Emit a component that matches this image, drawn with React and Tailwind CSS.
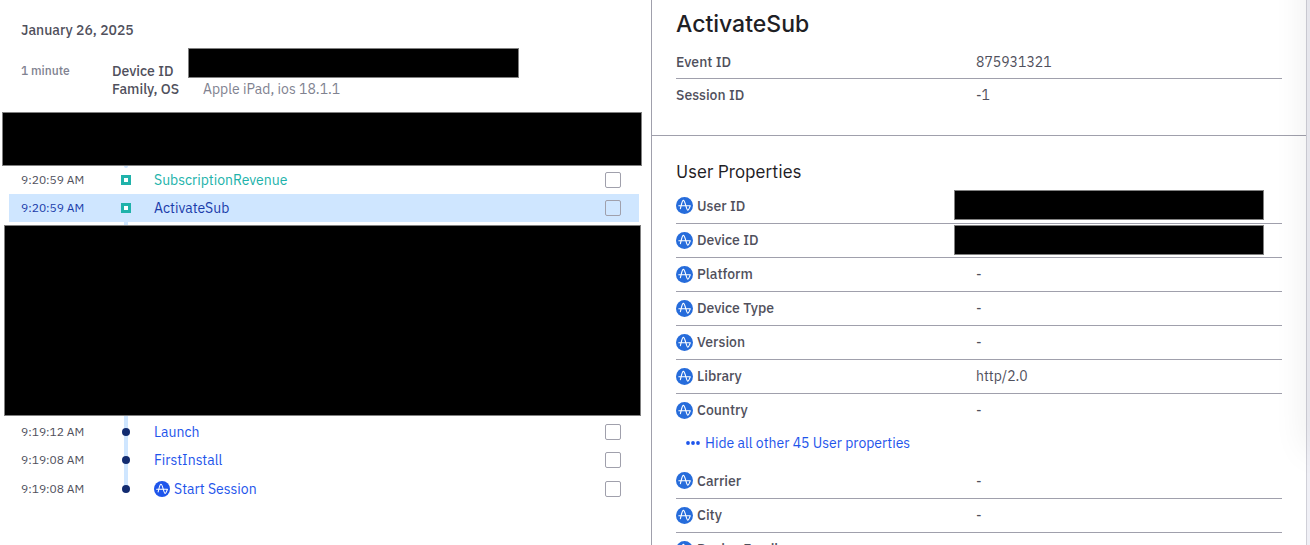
function AmplitudeIcon({ className }) {
  return (
    <svg viewBox="0 0 24 24" className={className} aria-hidden="true">
      <circle cx="12" cy="12" r="12" fill="currentColor" />
      <path
        d="M4 12.4H20.2C19 15.2 18 18.6 16.8 18.6C14.4 18.6 13.2 4.8 10.4 4.8C8.4 4.8 7.6 11.5 6.2 16.4"
        fill="none"
        stroke="#fff"
        strokeWidth="1.6"
        strokeLinecap="round"
        strokeLinejoin="round"
      />
    </svg>
  );
}

function Redaction({ className }) {
  return <div className={`border border-[#808080] bg-black ${className}`} />;
}

function Marker({ kind }) {
  return kind === "revenue" ? (
    <span className="relative size-[10px] border-[3px] border-[#20b2aa] bg-white" />
  ) : (
    <span className="relative size-2 rounded-full bg-[#122b70]" />
  );
}

function EventRow({ id, time, name, kind, selected, icon, line }) {
  return (
    <li
      className={`flex items-center pr-[18px] pl-3 ${icon ? "h-[30px]" : "h-7"} ${selected ? "bg-[#cfe6ff]" : ""}`}
    >
      <label htmlFor={id} className={`w-[91px] text-xs ${selected ? "text-[#1a3caa]" : "text-[#50505c]"}`}>
        {time}
      </label>
      <span className="relative flex w-7 items-center justify-center self-stretch">
        {line && <span className={`absolute left-3 w-1 bg-[#cfe6ff] ${line}`} />}
        <Marker kind={kind} />
      </span>
      <a
        href="#event"
        className={`ml-[14px] flex grow items-center gap-1 text-sm ${
          kind === "revenue" ? (selected ? "text-[#1a3caa]" : "text-[#20b2aa]") : "text-[#1e55eb]"
        }`}
      >
        {icon && <AmplitudeIcon className="size-4" />}
        {name}
      </a>
      <input
        id={id}
        type="checkbox"
        className="size-4 appearance-none rounded-[2px] border border-[#a0a0ac] checked:bg-[#1e55eb]"
      />
    </li>
  );
}

function Timeline() {
  return (
    <section className="min-w-0 text-[#50505c]">
      <h2 className="px-[21px] pt-5 text-sm leading-5 font-medium">January 26, 2025</h2>
      <div className="mt-2 flex pl-[21px]">
        <div className="mt-[14px] w-[91px] text-xs leading-[18px] font-medium text-[#808290]">1 minute</div>
        <dl className="grid grid-cols-[76px_331px] text-sm">
          <dt className="mt-[14px] h-4 leading-[18px] font-medium">Device ID</dt>
          <dd>
            <Redaction className="h-[30px]" />
          </dd>
          <dt className="leading-[22px] font-medium whitespace-nowrap">Family, OS</dt>
          <dd className="pl-[15px] leading-[22px] text-[#808290]">Apple iPad, ios 18.1.1</dd>
        </dl>
      </div>
      <Redaction className="mt-3 mr-[9px] ml-[2px] h-[54px]" />
      <ul className="mr-3 ml-[9px]">
        <EventRow id="e1" time="9:20:59 AM" name="SubscriptionRevenue" kind="revenue" line="top-0 h-[2px] rounded-b-sm" />
        <EventRow id="e2" time="9:20:59 AM" name="ActivateSub" kind="revenue" selected />
      </ul>
      <div className="ml-[124px] h-[3px] w-1 bg-[#cfe6ff]" />
      <Redaction className="mr-[10px] ml-1 h-[191px]" />
      <div className="ml-[124px] h-[2px] w-1 bg-[#cfe6ff]" />
      <ul className="mr-3 ml-[9px]">
        <EventRow id="e3" time="9:19:12 AM" name="Launch" kind="event" line="inset-y-0" />
        <EventRow id="e4" time="9:19:08 AM" name="FirstInstall" kind="event" line="inset-y-0" />
        <EventRow id="e5" time="9:19:08 AM" name="Start Session" kind="event" icon line="top-0 h-1/2" />
      </ul>
    </section>
  );
}

function PropertyTable({ rows }) {
  return (
    <table className="w-full table-fixed border-collapse text-sm">
      <tbody>
        {rows.map(([name, value]) => (
          <tr key={name} className="border-b border-[#a0a0ac] last:border-b-0">
            <th scope="row" className="h-[34px] w-[300px] p-0 text-left font-medium">
              <span className="flex items-center gap-1">
                <AmplitudeIcon className="size-[17px] text-[#266cdb]" />
                {name}
              </span>
            </th>
            <td className="relative p-0">
              {value ?? <Redaction className="absolute top-px right-[18px] -left-[22px] h-[30px]" />}
            </td>
          </tr>
        ))}
      </tbody>
    </table>
  );
}

function Details() {
  return (
    <section className="relative min-w-0 overflow-x-hidden overflow-y-auto border-l border-[#a0a0ac] text-[#50505c] [scrollbar-width:none]">
      <header className="border-b border-[#a0a0ac] px-6 pt-2 pb-6">
        <h1 className="font-['Gellix',Inter,sans-serif] text-[23px] leading-8 font-medium text-[#1e2024]">
          ActivateSub
        </h1>
        <table className="mt-[5px] w-full table-fixed border-collapse text-sm">
          <tbody>
            <tr className="border-b border-[#a0a0ac]">
              <th scope="row" className="h-[33px] w-[300px] p-0 pt-px text-left font-medium">Event ID</th>
              <td className="p-0 pt-px">875931321</td>
            </tr>
            <tr>
              <th scope="row" className="h-[33px] p-0 text-left font-medium">Session ID</th>
              <td className="p-0">-1</td>
            </tr>
          </tbody>
        </table>
      </header>
      <div className="px-6 pt-[22px]">
        <h2 className="mb-[3px] text-lg leading-7 text-[#1e2024]">User Properties</h2>
        <PropertyTable
          rows={[
            ["User ID", null],
            ["Device ID", null],
            ["Platform", "-"],
            ["Device Type", "-"],
            ["Version", "-"],
            ["Library", "http/2.0"],
            ["Country", "-"],
          ]}
        />
        <button
          type="button"
          className="mt-[3px] mb-[9px] ml-[10px] flex h-[25px] items-center gap-[5px] text-sm text-[#1e55eb]"
        >
          <svg viewBox="0 0 14 4" className="h-1 w-[14px]" fill="currentColor" aria-hidden="true">
            <circle cx="2" cy="2" r="1.9" />
            <circle cx="7" cy="2" r="1.9" />
            <circle cx="12" cy="2" r="1.9" />
          </svg>
          Hide all other 45 User properties
        </button>
        <PropertyTable
          rows={[
            ["Carrier", "-"],
            ["City", "-"],
            ["Device Family", "-"],
          ]}
        />
      </div>
    </section>
  );
}

export default function App() {
  return (
    <main className="relative grid h-screen grid-cols-[651fr_655fr_4px] overflow-hidden bg-white font-['IBM_Plex_Sans',Roboto,sans-serif]">
      <Timeline />
      <Details />
      <div className="border-l border-[#d0d0d8] bg-[#f0f0f6]" />
      <div className="pointer-events-none absolute -top-10 -right-5 h-[490px] w-5 shadow-[0_0_36px_rgba(0,0,0,0.11)]" />
    </main>
  );
}
